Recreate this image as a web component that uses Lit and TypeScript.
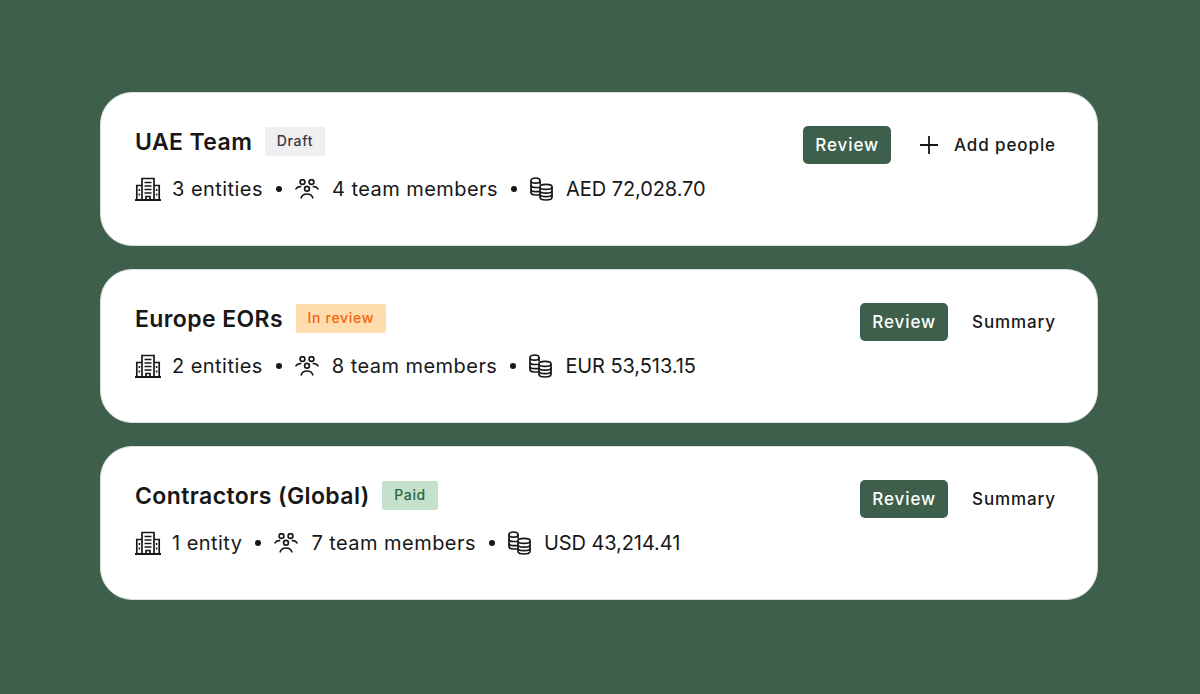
import { LitElement, html, css, svg } from 'lit';
import { customElement } from 'lit/decorators.js';

interface Team {
    name: string;
    status: string;
    tone: string;
    entities: string;
    members: string;
    amount: string;
    action: string;
    plus?: boolean;
}

const teams: Team[] = [
    { name: 'UAE Team', status: 'Draft', tone: 'draft', entities: '3 entities', members: '4 team members', amount: 'AED 72,028.70', action: 'Add people', plus: true },
    { name: 'Europe EORs', status: 'In review', tone: 'review', entities: '2 entities', members: '8 team members', amount: 'EUR 53,513.15', action: 'Summary' },
    { name: 'Contractors (Global)', status: 'Paid', tone: 'paid', entities: '1 entity', members: '7 team members', amount: 'USD 43,214.41', action: 'Summary' },
];

const buildingIcon = html`<svg class="icon building" viewBox="0 0 26 24" fill="none" stroke="#171717" stroke-width="1.7">
    ${svg`<path d="M0 23H26" stroke-width="2"/>
    <path d="M1.8 23V8.5H7M24.2 23V8.5H19"/>
    <path d="M7 23V1.5H19V23"/>
    <path d="M9.5 5.5H16.5M9.5 9H16.5M9.5 12.5H16.5M9.5 16H16.5M11 23V19.5H15V23"/>
    <path d="M4.4 12V14M4.4 16.5V18.5M21.6 12V14M21.6 16.5V18.5" stroke-width="1.5"/>`}
</svg>`;

const peopleIcon = html`<svg class="icon people" viewBox="0 0 24 20" fill="none" stroke="#171717" stroke-width="1.7" stroke-linecap="round">
    ${svg`<circle cx="7.5" cy="3" r="2.4"/>
    <circle cx="16.5" cy="3" r="2.4"/>
    <circle cx="12" cy="9.8" r="2.4"/>
    <path d="M1 9.8C2 8 3.6 7.4 5.6 7.6M23 9.8C22 8 20.4 7.4 18.4 7.6"/>
    <path d="M6.2 18.8C7.2 15.9 9.5 15 12 15C14.5 15 16.8 15.9 17.8 18.8"/>`}
</svg>`;

const coinsIcon = html`<svg class="icon coins" viewBox="0 0 23 24" fill="none" stroke="#171717" stroke-width="1.7">
    ${svg`<path d="M9.5 18H5.5C3 18 1 17 1 15.6V3.5C1 2 3 1 5.5 1C8 1 10 2 10 3.5V7.5"/>
    <path d="M1 3.7C1 5.1 3 6.1 5.5 6.1C8 6.1 10 5.1 10 3.7M1 8.2C1 9.6 3 10.5 5.5 10.5H9.5M1 12.5C1 13.9 3 14.6 5.5 14.6H9.5"/>
    <path d="M10 9.8C10 8.4 12.7 7.4 16 7.4C19.3 7.4 22 8.4 22 9.8V20.3C22 21.9 19.3 23 16 23C12.7 23 10 21.9 10 20.3Z"/>
    <path d="M10 10C10 11.4 12.7 12.4 16 12.4C19.3 12.4 22 11.4 22 10M10 13.8C10 15.2 12.7 16.2 16 16.2C19.3 16.2 22 15.2 22 13.8M10 17.3C10 18.7 12.7 19.7 16 19.7C19.3 19.7 22 18.7 22 17.3"/>`}
</svg>`;

@customElement('app-root')
export class AppRoot extends LitElement {
    static override styles = css`
        :host {
            display: block;
            height: 694px;
            background: #3d5f4c;
            font-family: 'Inter', 'Liberation Sans', sans-serif;
            color: #171717;
        }

        .list {
            display: flex;
            flex-direction: column;
            gap: 23px;
            width: 998px;
            margin-left: 100px;
            padding-top: 92px;
        }

        .card {
            box-sizing: border-box;
            height: 154px;
            padding: 33px 41px 0 34px;
            background: #fff;
            border: 1px solid #d8e0db;
            border-radius: 32px;
        }

        .top {
            display: flex;
            justify-content: space-between;
            align-items: flex-start;
            height: 38px;
        }

        .title {
            display: flex;
            align-items: center;
            gap: 12.5px;
            margin-top: 1px;
            height: 29px;
        }

        .name {
            font-size: 23px;
            font-weight: 600;
            line-height: 30px;
            letter-spacing: 0.4px;
        }

        .badge {
            padding: 0 12px;
            height: 29px;
            line-height: 28px;
            font-size: 14px;
            font-weight: 500;
            letter-spacing: 0.7px;
            border-radius: 2px;
        }

        .draft { background: #efeef1; color: #3a3a3a; }
        .review { background: #ffdcae; color: #f2650a; }
        .paid { background: #c5e0cb; color: #2a6340; }

        .actions {
            display: flex;
            align-items: center;
            gap: 24px;
        }

        .btn {
            height: 38px;
            box-sizing: border-box;
            padding: 0 12px;
            line-height: 38px;
            font-size: 17px;
            font-weight: 500;
            letter-spacing: 0.9px;
            color: #fff;
            background: #3d5f4c;
            border-radius: 5px;
        }

        .link {
            display: flex;
            align-items: center;
            gap: 16px;
            font-size: 17px;
            font-weight: 500;
            letter-spacing: 0.9px;
        }

        .plus {
            display: block;
            margin-left: 5px;
        }

        .meta {
            display: flex;
            align-items: center;
            margin-top: 11px;
            height: 28px;
            font-size: 20px;
            letter-spacing: 0.45px;
        }

        .amount { letter-spacing: -0.08px; }

        .icon { display: block; flex: none; }
        .building { width: 26px; height: 24px; margin-right: 11px; }
        .people { width: 24px; height: 20px; margin-right: 13px; }
        .coins { width: 23px; height: 24px; margin-right: 13px; }

        .dot {
            width: 6px;
            height: 6px;
            margin: 0 13px;
            background: #171717;
            border-radius: 50%;
        }
    `;

    private renderCard(t: Team) {
        return html`
            <div class="card">
                <div class="top">
                    <div class="title">
                        <span class="name">${t.name}</span>
                        <span class="badge ${t.tone}">${t.status}</span>
                    </div>
                    <div class="actions">
                        <span class="btn">Review</span>
                        <span class="link">
                            ${t.plus ? html`<svg class="plus" width="18" height="18" viewBox="0 0 18 18" stroke="#171717" stroke-width="1.8"><path d="M9 0V18M0 9H18"/></svg>` : null}
                            ${t.action}
                        </span>
                    </div>
                </div>
                <div class="meta">
                    ${buildingIcon}<span>${t.entities}</span>
                    <i class="dot"></i>
                    ${peopleIcon}<span>${t.members}</span>
                    <i class="dot"></i>
                    ${coinsIcon}<span class="amount">${t.amount}</span>
                </div>
            </div>
        `;
    }

    override render() {
        return html`<div class="list">${teams.map((t) => this.renderCard(t))}</div>`;
    }
}
